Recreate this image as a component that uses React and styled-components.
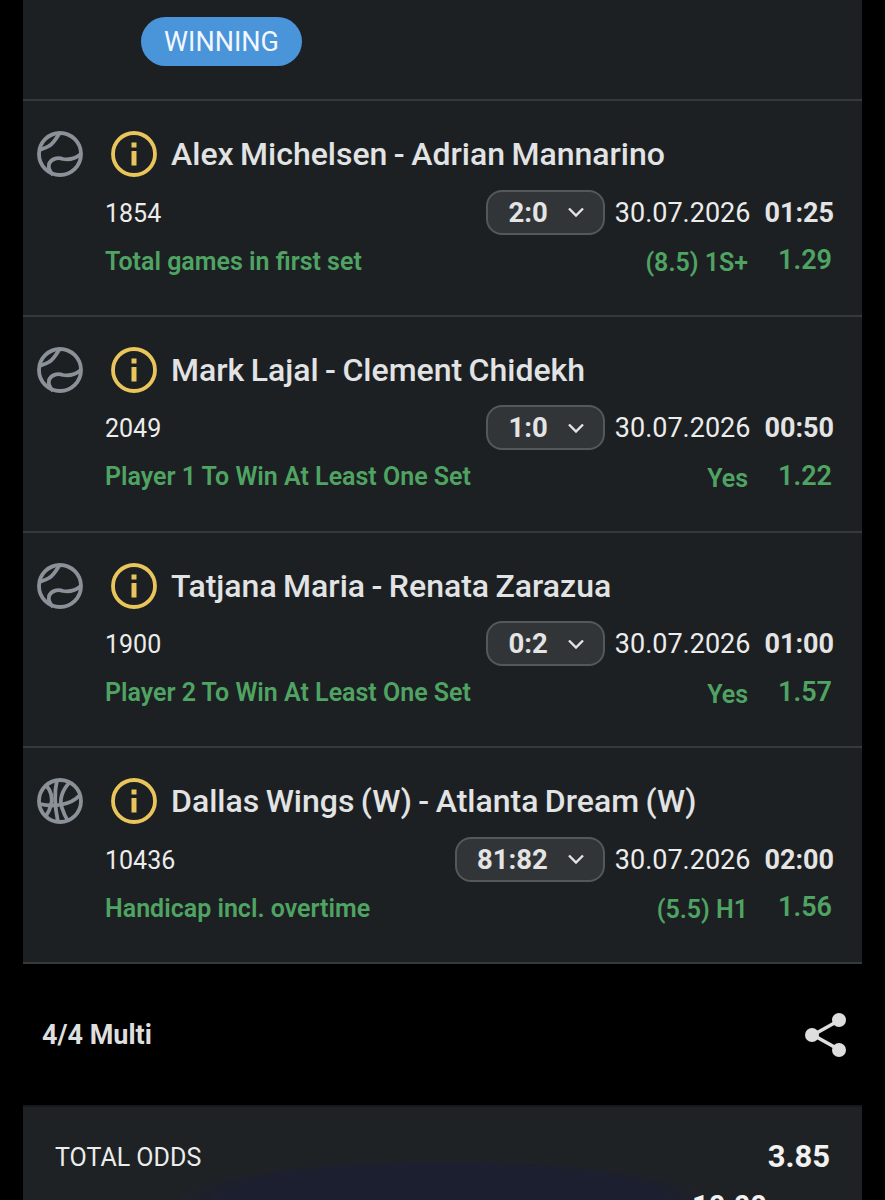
import React from "react";
import styled, { createGlobalStyle } from "styled-components";

const GlobalStyle = createGlobalStyle`
  html, body {
    margin: 0;
    padding: 0;
    background: #000;
    font-family: Roboto, "Liberation Sans", sans-serif;
  }
`;

const bets = [
  { sport: "tennis", teams: "Alex Michelsen - Adrian Mannarino", id: "1854", score: "2:0", time: "01:25", market: "Total games in first set", pick: "(8.5) 1S+", odds: "1.29" },
  { sport: "tennis", teams: "Mark Lajal - Clement Chidekh", id: "2049", score: "1:0", time: "00:50", market: "Player 1 To Win At Least One Set", pick: "Yes", odds: "1.22" },
  { sport: "tennis", teams: "Tatjana Maria - Renata Zarazua", id: "1900", score: "0:2", time: "01:00", market: "Player 2 To Win At Least One Set", pick: "Yes", odds: "1.57" },
  { sport: "basketball", teams: "Dallas Wings (W) - Atlanta Dream (W)", id: "10436", score: "81:82", time: "02:00", market: "Handicap incl. overtime", pick: "(5.5) H1", odds: "1.56" },
];

const TennisIcon = () => (
  <SportSvg viewBox="0 0 46 46">
    <circle cx="23" cy="23" r="21" />
    <path d="M22 3C19 8 16 13 12 15C9 17 5 18 2 19" />
    <path d="M44 23C38 28 32 29 26 28C20 26 14 28 12 33C11 38 13 41 16 44" />
  </SportSvg>
);

const BasketballIcon = () => (
  <SportSvg viewBox="0 0 46 46">
    <circle cx="23" cy="23" r="21" />
    <path d="M3 26C15 29 33 28 43 17" />
    <path d="M20 2C17 15 18 30 21 44" />
    <path d="M9 7C14 13 16 20 14 27C13 31 11 35 9 38" />
    <path d="M33 4C25 12 22 22 25 30C27 36 29 40 31 43" />
  </SportSvg>
);

const InfoIcon = () => (
  <InfoSvg viewBox="0 0 46 46">
    <circle cx="23" cy="23" r="21" />
    <rect className="mark" x="20.5" y="11.5" width="5" height="5" />
    <rect className="mark" x="20.5" y="20" width="5" height="14.5" />
  </InfoSvg>
);

const App = () => {
  return (
    <>
      <GlobalStyle />
      <Page>
        <Header>
          <Badge>WINNING</Badge>
        </Header>
        {bets.map((bet) => (
          <BetRow key={bet.id}>
            <TitleLine>
              <SportSlot>{bet.sport === "tennis" ? <TennisIcon /> : <BasketballIcon />}</SportSlot>
              <InfoIcon />
              <Teams>{bet.teams}</Teams>
            </TitleLine>
            <MetaLine>
              <EventId>{bet.id}</EventId>
              <ScoreBox>
                {bet.score}
                <svg width="16" height="10" viewBox="0 0 16 10">
                  <path d="M1 1.5L8 8.5L15 1.5" fill="none" stroke="#e4e4e4" strokeWidth="2.4" />
                </svg>
              </ScoreBox>
              <DateText>30.07.2026</DateText>
              <TimeText>{bet.time}</TimeText>
            </MetaLine>
            <MarketLine>
              <Market>{bet.market}</Market>
              <Pick>{bet.pick}</Pick>
              <Odds>{bet.odds}</Odds>
            </MarketLine>
          </BetRow>
        ))}
        <MultiBar>
          <MultiLabel>4/4 Multi</MultiLabel>
          <svg width="44" height="46" viewBox="0 0 44 46">
            <path d="M34 9L9 23L34 37" fill="none" stroke="#dedede" strokeWidth="3.5" />
            <circle cx="35" cy="8" r="7" fill="#dedede" />
            <circle cx="8" cy="23" r="7" fill="#dedede" />
            <circle cx="35" cy="38" r="7" fill="#dedede" />
          </svg>
        </MultiBar>
        <Summary>
          <SummaryRow>
            <SummaryLabel>TOTAL ODDS</SummaryLabel>
            <SummaryValue>3.85</SummaryValue>
          </SummaryRow>
          <StakeValue>10.00</StakeValue>
        </Summary>
      </Page>
    </>
  );
};

const Page = styled.div`
  width: 839px;
  height: 1200px;
  margin-left: 23px;
  overflow: hidden;
  background: #000;
`;

const Header = styled.div`
  height: 99px;
  box-sizing: border-box;
  padding: 17px 0 0 118px;
  background: #1d2022;
`;

const Badge = styled.div`
  display: inline-block;
  width: 161px;
  height: 49px;
  line-height: 51px;
  border-radius: 25px;
  background: #4a94da;
  color: #f2f7fc;
  font-size: 27px;
  text-align: center;
`;

const BetRow = styled.div`
  box-sizing: border-box;
  height: 215.75px;
  padding: 30px 28px 0 14px;
  background: #1d2022;
  border-top: 2px solid #36393b;
`;

const TitleLine = styled.div`
  display: flex;
  align-items: center;
  height: 46px;
`;

const SportSlot = styled.div`
  width: 74px;
  height: 46px;
`;

const SportSvg = styled.svg`
  width: 46px;
  height: 46px;
  fill: none;
  stroke: #8b9198;
  stroke-width: 3.8;
`;

const InfoSvg = styled.svg`
  width: 46px;
  height: 46px;
  flex: none;
  fill: none;
  stroke: #e9c55c;
  stroke-width: 3.8;

  .mark {
    fill: #e9c55c;
    stroke: none;
  }
`;

const Teams = styled.div`
  margin-left: 14px;
  color: #e2e3e4;
  font-size: 32px;
  font-weight: 500;
  word-spacing: -1.5px;
  white-space: nowrap;
`;

const MetaLine = styled.div`
  display: flex;
  align-items: center;
  height: 46px;
  margin-top: 12px;
  padding-left: 68px;
`;

const EventId = styled.div`
  margin-right: auto;
  padding-top: 2px;
  color: #ececec;
  font-size: 25px;
`;

const ScoreBox = styled.div`
  display: flex;
  align-items: center;
  justify-content: space-between;
  box-sizing: border-box;
  height: 45px;
  padding: 0 19px 0 20px;
  gap: 20px;
  border: 2px solid #55585a;
  border-radius: 16px;
  background: #323538;
  color: #e4e4e4;
  font-size: 27.5px;
  font-weight: 700;
`;

const DateText = styled.div`
  margin-left: 10px;
  padding-top: 1px;
  color: #ececec;
  font-size: 27px;
`;

const TimeText = styled.div`
  margin-left: 14px;
  padding-top: 1px;
  color: #e4e4e4;
  font-size: 27px;
  font-weight: 700;
`;

const MarketLine = styled.div`
  display: flex;
  align-items: center;
  height: 36px;
  margin-top: 8px;
  padding: 0 2px 0 68px;
  color: #4fa463;
`;

const Market = styled.div`
  margin-right: auto;
  font-size: 25px;
  font-weight: 600;
`;

const Pick = styled.div`
  padding-top: 3px;
  font-size: 25px;
  font-weight: 600;
`;

const Odds = styled.div`
  margin-left: 30px;
  padding-bottom: 2px;
  font-size: 27px;
  font-weight: 600;
`;

const MultiBar = styled.div`
  display: flex;
  align-items: center;
  justify-content: space-between;
  box-sizing: border-box;
  height: 143px;
  padding: 0 14px 0 19px;
  background: #000;
  border-top: 2px solid #36393b;
`;

const MultiLabel = styled.div`
  color: #dedede;
  font-size: 27px;
  font-weight: 700;
`;

const Summary = styled.div`
  box-sizing: border-box;
  height: 95px;
  padding: 31px 32px 0 32px;
  background: radial-gradient(ellipse 270px 42px at 50% 100%, #1c1f30 0%, #1c1f30 80%, #1f2224 100%);
  border-top: 2px solid #16181a;
`;

const SummaryRow = styled.div`
  display: flex;
  align-items: center;
  justify-content: space-between;
  height: 36px;
`;

const SummaryLabel = styled.div`
  padding-top: 3px;
  color: #ececec;
  font-size: 25px;
`;

const SummaryValue = styled.div`
  color: #f2f2f2;
  font-size: 31px;
  font-weight: 700;
`;

const StakeValue = styled.div`
  margin-top: 15px;
  padding-right: 63px;
  color: #f2f2f2;
  font-size: 29px;
  font-weight: 700;
  text-align: right;
`;

export default App;
